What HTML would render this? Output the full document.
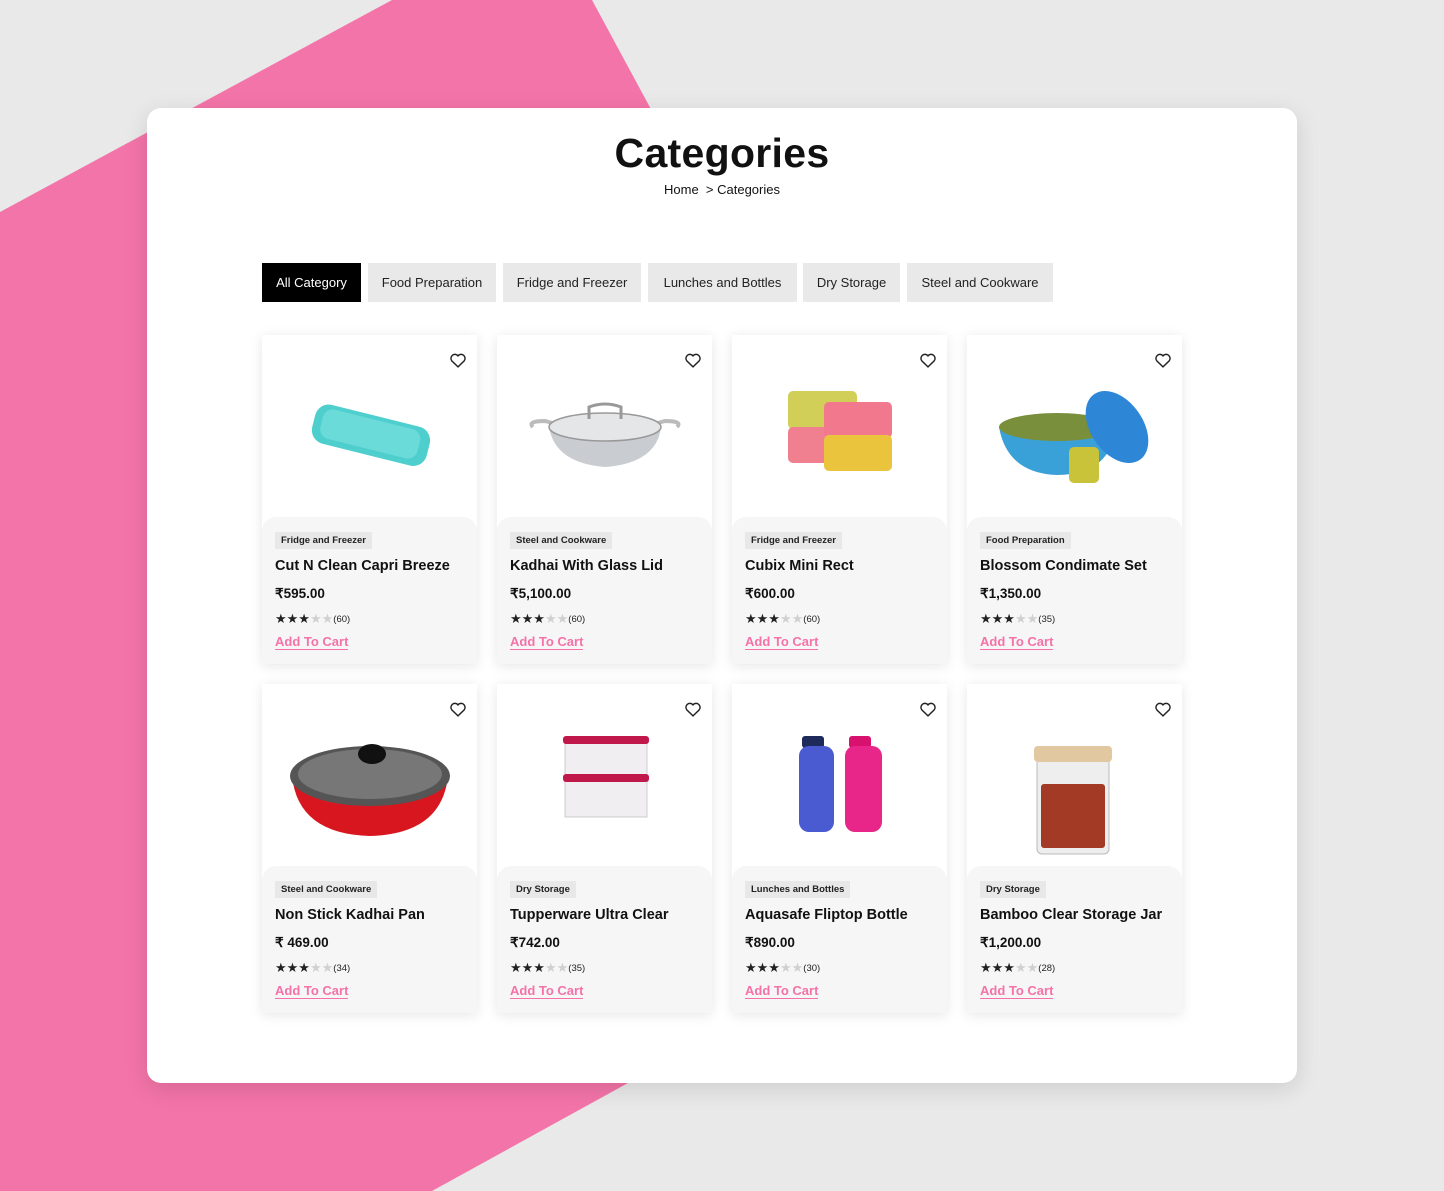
<!DOCTYPE html>
<html><head><meta charset="utf-8"><style>
*{margin:0;padding:0;box-sizing:border-box}
body{width:1444px;height:1191px;background:#e9e9e9;position:relative;overflow:hidden;font-family:"Liberation Sans",Arial,sans-serif;color:#111}
.bg{position:absolute;left:0;top:0}
.main{position:absolute;left:147px;top:108px;width:1150px;height:975px;background:#fff;border-radius:14px;box-shadow:0 6px 24px rgba(0,0,0,.12)}
h1{position:absolute;left:0;width:100%;top:22px;text-align:center;font-size:41px;font-weight:bold;letter-spacing:.3px}
.bc{position:absolute;left:0;width:100%;top:74px;text-align:center;font-size:13px;color:#111}
.tab{position:absolute;top:155px;height:39px;line-height:39px;font-size:13px;text-align:center;background:#e9e9e9;color:#222}
.tab.a{background:#000;color:#fff}
.card{position:absolute;width:215px;height:329px;background:#fff;box-shadow:0 2px 12px rgba(0,0,0,.10)}
.card svg{position:absolute;left:0;top:0}
.card svg.hrt{left:auto;right:10px;top:17px}
.info{position:absolute;left:0;top:182px;width:215px;height:147px;background:#f6f6f6;border-radius:14px 14px 0 0;padding:13px 13px}
.tag{display:inline-block;background:#e8e8e8;font-size:9.5px;font-weight:bold;padding:3px 6px;color:#222}
.nm{font-size:14.5px;font-weight:bold;margin-top:9px}
.pr{font-size:13.5px;font-weight:bold;margin-top:12px}
.st{font-size:13px;margin-top:10px;color:#222;line-height:14px}
.st i{font-style:normal;color:#d0d0d0}
.st small{font-size:9.5px;vertical-align:1px}
.ac{display:inline-block;margin-top:8px;font-size:13px;font-weight:bold;color:#f472a8;border-bottom:1.5px solid #f472a8;line-height:14px}
</style></head><body>
<svg class="bg" width="1444" height="1191"><polygon points="392,0 592,0 700,200 700,1083 628,1083 432,1191 0,1191 0,212" fill="#f374a8"/></svg>
<div class="main">
<h1>Categories</h1>
<div class="bc">Home &nbsp;&gt; Categories</div>
<div class="tab a" style="left:115px;width:99px">All Category</div>
<div class="tab" style="left:221px;width:128px">Food Preparation</div>
<div class="tab" style="left:356px;width:138px">Fridge and Freezer</div>
<div class="tab" style="left:501px;width:149px">Lunches and Bottles</div>
<div class="tab" style="left:656px;width:97px">Dry Storage</div>
<div class="tab" style="left:760px;width:146px">Steel and Cookware</div>
</div>

<div class="card" style="left:262px;top:335px">
<svg width="215" height="182"><g transform="rotate(14 108 100)"><rect x="50" y="80" width="118" height="40" rx="14" fill="#4ecfcd"/><rect x="58" y="84" width="100" height="30" rx="10" fill="#6adbd8"/></g></svg>
<svg class="hrt" width="18" height="16" viewBox="0 0 24 22"><path d="M12 20.5 3.5 12.2A5.3 5.3 0 0 1 12 5.3a5.3 5.3 0 0 1 8.5 6.9Z" fill="none" stroke="#222" stroke-width="2"/></svg>
<div class="info"><span class="tag">Fridge and Freezer</span><div class="nm">Cut N Clean Capri Breeze</div><div class="pr">₹595.00</div><div class="st">★★★<i>★★</i><small>(60)</small></div><a class="ac">Add To Cart</a></div></div>

<div class="card" style="left:497px;top:335px">
<svg width="215" height="182"><path d="M36 92 Q30 86 48 86 L70 92" fill="none" stroke="#bbb" stroke-width="4"/><path d="M180 92 Q186 86 168 86 L146 92" fill="none" stroke="#bbb" stroke-width="4"/><path d="M52 92 Q108 108 164 92 Q160 128 108 132 Q58 128 52 92Z" fill="#c9ccd0"/><ellipse cx="108" cy="92" rx="56" ry="14" fill="#e4e6e8" stroke="#999" stroke-width="1.5"/><path d="M92 84 V72 Q108 66 124 72 V84" fill="none" stroke="#999" stroke-width="3"/></svg>
<svg class="hrt" width="18" height="16" viewBox="0 0 24 22"><path d="M12 20.5 3.5 12.2A5.3 5.3 0 0 1 12 5.3a5.3 5.3 0 0 1 8.5 6.9Z" fill="none" stroke="#222" stroke-width="2"/></svg>
<div class="info"><span class="tag">Steel and Cookware</span><div class="nm">Kadhai With Glass Lid</div><div class="pr">₹5,100.00</div><div class="st">★★★<i>★★</i><small>(60)</small></div><a class="ac">Add To Cart</a></div></div>

<div class="card" style="left:732px;top:335px">
<svg width="215" height="182"><rect x="56" y="56" width="69" height="38" rx="5" fill="#d2cf58"/><rect x="56" y="92" width="40" height="36" rx="5" fill="#f0808f"/><rect x="92" y="67" width="68" height="36" rx="5" fill="#f2788e"/><rect x="92" y="100" width="68" height="36" rx="5" fill="#e9c43c"/></svg>
<svg class="hrt" width="18" height="16" viewBox="0 0 24 22"><path d="M12 20.5 3.5 12.2A5.3 5.3 0 0 1 12 5.3a5.3 5.3 0 0 1 8.5 6.9Z" fill="none" stroke="#222" stroke-width="2"/></svg>
<div class="info"><span class="tag">Fridge and Freezer</span><div class="nm">Cubix Mini Rect</div><div class="pr">₹600.00</div><div class="st">★★★<i>★★</i><small>(60)</small></div><a class="ac">Add To Cart</a></div></div>

<div class="card" style="left:967px;top:335px">
<svg width="215" height="182"><path d="M32 92 Q100 110 150 88 Q145 140 90 140 Q40 138 32 92Z" fill="#3aa0d8"/><ellipse cx="90" cy="92" rx="58" ry="14" fill="#7a8f3c"/><ellipse cx="150" cy="92" rx="26" ry="40" transform="rotate(-35 150 92)" fill="#2e86d6"/><rect x="102" y="112" width="30" height="36" rx="5" fill="#c9c33a"/></svg>
<svg class="hrt" width="18" height="16" viewBox="0 0 24 22"><path d="M12 20.5 3.5 12.2A5.3 5.3 0 0 1 12 5.3a5.3 5.3 0 0 1 8.5 6.9Z" fill="none" stroke="#222" stroke-width="2"/></svg>
<div class="info"><span class="tag">Food Preparation</span><div class="nm">Blossom Condimate Set</div><div class="pr">₹1,350.00</div><div class="st">★★★<i>★★</i><small>(35)</small></div><a class="ac">Add To Cart</a></div></div>

<div class="card" style="left:262px;top:684px">
<svg width="215" height="182"><path d="M30 92 Q108 120 186 92 Q180 150 108 152 Q36 150 30 92Z" fill="#d8161f"/><ellipse cx="108" cy="92" rx="80" ry="30" fill="#555"/><ellipse cx="108" cy="90" rx="72" ry="25" fill="#777"/><ellipse cx="110" cy="70" rx="14" ry="10" fill="#111"/></svg>
<svg class="hrt" width="18" height="16" viewBox="0 0 24 22"><path d="M12 20.5 3.5 12.2A5.3 5.3 0 0 1 12 5.3a5.3 5.3 0 0 1 8.5 6.9Z" fill="none" stroke="#222" stroke-width="2"/></svg>
<div class="info"><span class="tag">Steel and Cookware</span><div class="nm">Non Stick Kadhai Pan</div><div class="pr">₹ 469.00</div><div class="st">★★★<i>★★</i><small>(34)</small></div><a class="ac">Add To Cart</a></div></div>

<div class="card" style="left:497px;top:684px">
<svg width="215" height="182"><rect x="68" y="55" width="82" height="36" fill="#f0eef0" stroke="#ccc"/><rect x="66" y="52" width="86" height="8" rx="3" fill="#c0184a"/><rect x="68" y="95" width="82" height="38" fill="#f0eef0" stroke="#ccc"/><rect x="66" y="90" width="86" height="8" rx="3" fill="#c0184a"/></svg>
<svg class="hrt" width="18" height="16" viewBox="0 0 24 22"><path d="M12 20.5 3.5 12.2A5.3 5.3 0 0 1 12 5.3a5.3 5.3 0 0 1 8.5 6.9Z" fill="none" stroke="#222" stroke-width="2"/></svg>
<div class="info"><span class="tag">Dry Storage</span><div class="nm">Tupperware Ultra Clear</div><div class="pr">₹742.00</div><div class="st">★★★<i>★★</i><small>(35)</small></div><a class="ac">Add To Cart</a></div></div>

<div class="card" style="left:732px;top:684px">
<svg width="215" height="182"><rect x="70" y="52" width="22" height="12" rx="3" fill="#1d2a5a"/><rect x="67" y="62" width="35" height="86" rx="10" fill="#4a5ad0"/><rect x="117" y="52" width="22" height="12" rx="3" fill="#d8106e"/><rect x="113" y="62" width="37" height="86" rx="10" fill="#e8268a"/></svg>
<svg class="hrt" width="18" height="16" viewBox="0 0 24 22"><path d="M12 20.5 3.5 12.2A5.3 5.3 0 0 1 12 5.3a5.3 5.3 0 0 1 8.5 6.9Z" fill="none" stroke="#222" stroke-width="2"/></svg>
<div class="info"><span class="tag">Lunches and Bottles</span><div class="nm">Aquasafe Fliptop Bottle</div><div class="pr">₹890.00</div><div class="st">★★★<i>★★</i><small>(30)</small></div><a class="ac">Add To Cart</a></div></div>

<div class="card" style="left:967px;top:684px">
<svg width="215" height="182"><rect x="70" y="72" width="72" height="98" rx="5" fill="#eee" stroke="#bbb"/><rect x="74" y="100" width="64" height="64" rx="3" fill="#a33a26"/><rect x="67" y="62" width="78" height="16" rx="4" fill="#e2c8a0"/></svg>
<svg class="hrt" width="18" height="16" viewBox="0 0 24 22"><path d="M12 20.5 3.5 12.2A5.3 5.3 0 0 1 12 5.3a5.3 5.3 0 0 1 8.5 6.9Z" fill="none" stroke="#222" stroke-width="2"/></svg>
<div class="info"><span class="tag">Dry Storage</span><div class="nm">Bamboo Clear Storage Jar</div><div class="pr">₹1,200.00</div><div class="st">★★★<i>★★</i><small>(28)</small></div><a class="ac">Add To Cart</a></div></div>
</body></html>
